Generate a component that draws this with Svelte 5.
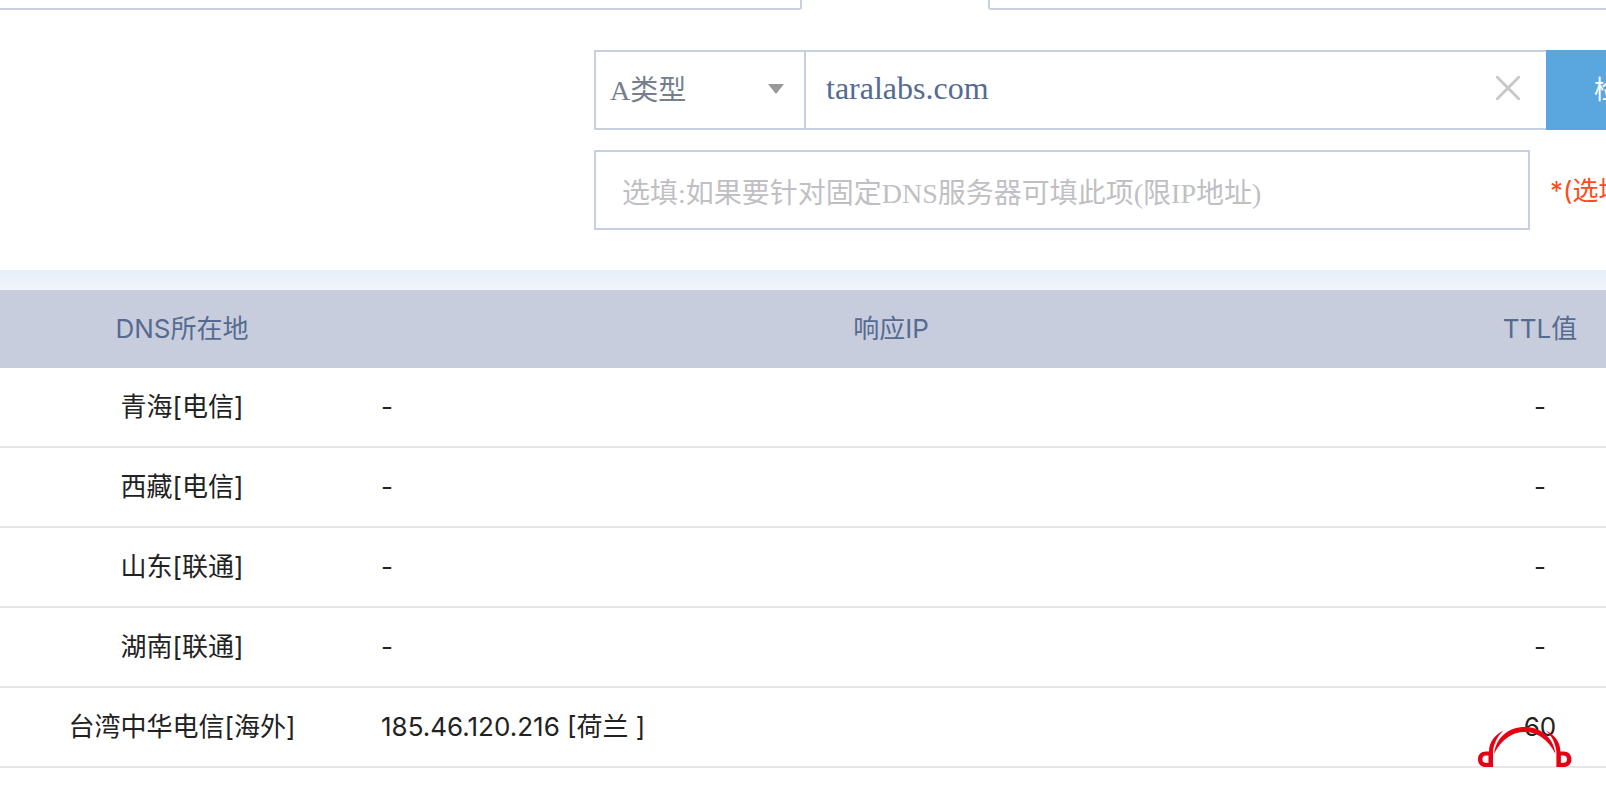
<script>
    let recordType = 'A';
    let domain = 'taralabs.com';
    let server = '';

    const results = [
        { place: '青海[电信]', ip: '-', ttl: '-' },
        { place: '西藏[电信]', ip: '-', ttl: '-' },
        { place: '山东[联通]', ip: '-', ttl: '-' },
        { place: '湖南[联通]', ip: '-', ttl: '-' },
        { place: '台湾中华电信[海外]', ip: '185.46.120.216 [荷兰 ]', ttl: '60' }
    ];

    function clearDomain() {
        domain = '';
    }
</script>

<main>
    <div class="tabs">
        <div class="tabEdge before"></div>
        <div class="tabEdge after"></div>
    </div>

    <form on:submit|preventDefault>
        <div class="row query">
            <div class="typeBox">
                <select bind:value={recordType} aria-label="类型">
                    <option value="A">A类型</option>
                </select>
                <svg class="arrow" viewBox="0 0 16 10" aria-hidden="true">
                    <path d="M0 0h16L8 10z" fill="#999" />
                </svg>
            </div>
            <div class="domainBox">
                <input type="text" bind:value={domain} aria-label="域名">
                <button type="button" class="clear" aria-label="清空" on:click={clearDomain}>
                    <svg viewBox="0 0 24 24" aria-hidden="true">
                        <path d="M0 0l24 24M24 0L0 24" stroke="#c8c8c8" stroke-width="3" />
                    </svg>
                </button>
            </div>
            <button type="submit" class="submit">检测</button>
        </div>
        <div class="row">
            <input type="text" id="server" class="server" bind:value={server} placeholder="选填:如果要针对固定DNS服务器可填此项(限IP地址)">
            <label for="server">*(选填)</label>
        </div>
    </form>

    <div class="band"></div>

    <table>
        <thead>
            <tr>
                <th class="place">DNS所在地</th>
                <th>响应IP</th>
                <th class="ttl">TTL值</th>
            </tr>
        </thead>
        <tbody>
            {#each results as result}
                <tr>
                    <td>{result.place}</td>
                    <td class="ip">{result.ip}</td>
                    <td>{result.ttl}</td>
                </tr>
            {/each}
        </tbody>
    </table>

    <svg class="headset" viewBox="0 0 94 42" aria-hidden="true">
        <defs>
            <g id="ear" fill="#e60012">
                <path fill-rule="evenodd" d="M25.500 4.500C17 8.500 11 16 11 25.500H8C3 25.500 0 28.500 0 33.200S3 41 8 41h7V26C15.500 18 19.500 10 25.500 4.500zM10.500 29.500v7.300H8c-2.400 0-3.600-1.300-3.600-3.600S5.600 29.500 8 29.500z" />
            </g>
        </defs>
        <use href="#ear" />
        <use href="#ear" transform="translate(93.4 0) scale(-1 1)" />
        <path d="M16 28C18 11 31 1 46.700 1S75.500 11 77.500 28C70 13 59 6 46.700 6S23.500 13 16 28z" fill="#e60012" />
    </svg>
</main>

<style>
    :global(body) {
        margin: 0;
        background: #fff;
    }
    * {
        box-sizing: border-box;
    }
    main {
        overflow: hidden;
        color: #222;
        font-family: Inter, "Noto Sans CJK SC", sans-serif;
        font-size: 26px;
        line-height: 30px;
    }
    .tabs {
        display: flex;
        justify-content: space-between;
        gap: 186px;
        height: 10px;
    }
    .tabEdge {
        border-bottom: 2px solid #c7d0e0;
    }
    .before {
        flex: 0 0 802px;
        border-right: 2px solid #c7d0e0;
        border-bottom-right-radius: 3px;
    }
    .after {
        flex: 1;
        border-left: 2px solid #c7d0e0;
        border-bottom-left-radius: 3px;
    }
    /* the form runs past the right edge of the window */
    form {
        display: flex;
        flex-direction: column;
        gap: 20px;
        margin-right: -88px;
        padding: 40px 0 40px 594px;
    }
    .row {
        display: flex;
        height: 80px;
    }
    select,
    input,
    button {
        margin: 0;
        border: none;
        border-radius: 0;
        background: none;
        outline: none;
    }
    select,
    input {
        font-family: "Liberation Serif", "Noto Sans CJK SC", serif;
    }
    .typeBox {
        position: relative;
        width: 212px;
        border: 2px solid #c7d0e0;
    }
    select {
        appearance: none;
        width: 100%;
        height: 100%;
        padding: 0 14px;
        color: #76808c;
        font-size: 28px;
    }
    .arrow {
        position: absolute;
        top: 32px;
        right: 20px;
        width: 16px;
        height: 10px;
        pointer-events: none;
    }
    .domainBox {
        display: flex;
        flex: 1;
        align-items: center;
        padding: 0 26px 4px 0;
        border: solid #c7d0e0;
        border-width: 2px 0;
    }
    .domainBox input {
        flex: 1;
        min-width: 0;
        height: 72px;
        padding: 0 20px;
        color: #566b90;
        font-size: 32px;
    }
    .clear {
        width: 24px;
        height: 24px;
        padding: 0;
        cursor: pointer;
    }
    .clear svg {
        display: block;
    }
    .submit {
        width: 148px;
        background: #5aa7e0;
        color: #fff;
        font-family: inherit;
        font-size: 26px;
        line-height: 30px;
        cursor: pointer;
    }
    .server {
        flex: 1;
        min-width: 0;
        padding: 8px 26px 0;
        border: 2px solid #c7d0e0;
        font-size: 28px;
    }
    .server::placeholder {
        color: #c0c0c4;
    }
    label {
        width: 164px;
        padding-left: 20px;
        color: #ff4a1c;
        line-height: 82px;
        white-space: nowrap;
    }
    .band {
        height: 20px;
        background: linear-gradient(#e6eef8, #f0f5fa);
    }
    table {
        width: calc(100% + 56px);
        border-collapse: separate;
        border-spacing: 0;
        table-layout: fixed;
        text-align: center;
    }
    th {
        height: 78px;
        padding: 0;
        background: #c8cdde;
        color: #566b90;
        font-weight: normal;
    }
    .place {
        width: 364px;
    }
    .ttl {
        width: 244px;
    }
    td {
        height: 80px;
        padding: 0;
        border-bottom: 2px solid #e6e6e6;
    }
    .ip {
        padding-left: 17px;
        text-align: left;
    }
    .headset {
        position: fixed;
        right: 34px;
        bottom: 24px;
        width: 94px;
        height: 42px;
    }
</style>
